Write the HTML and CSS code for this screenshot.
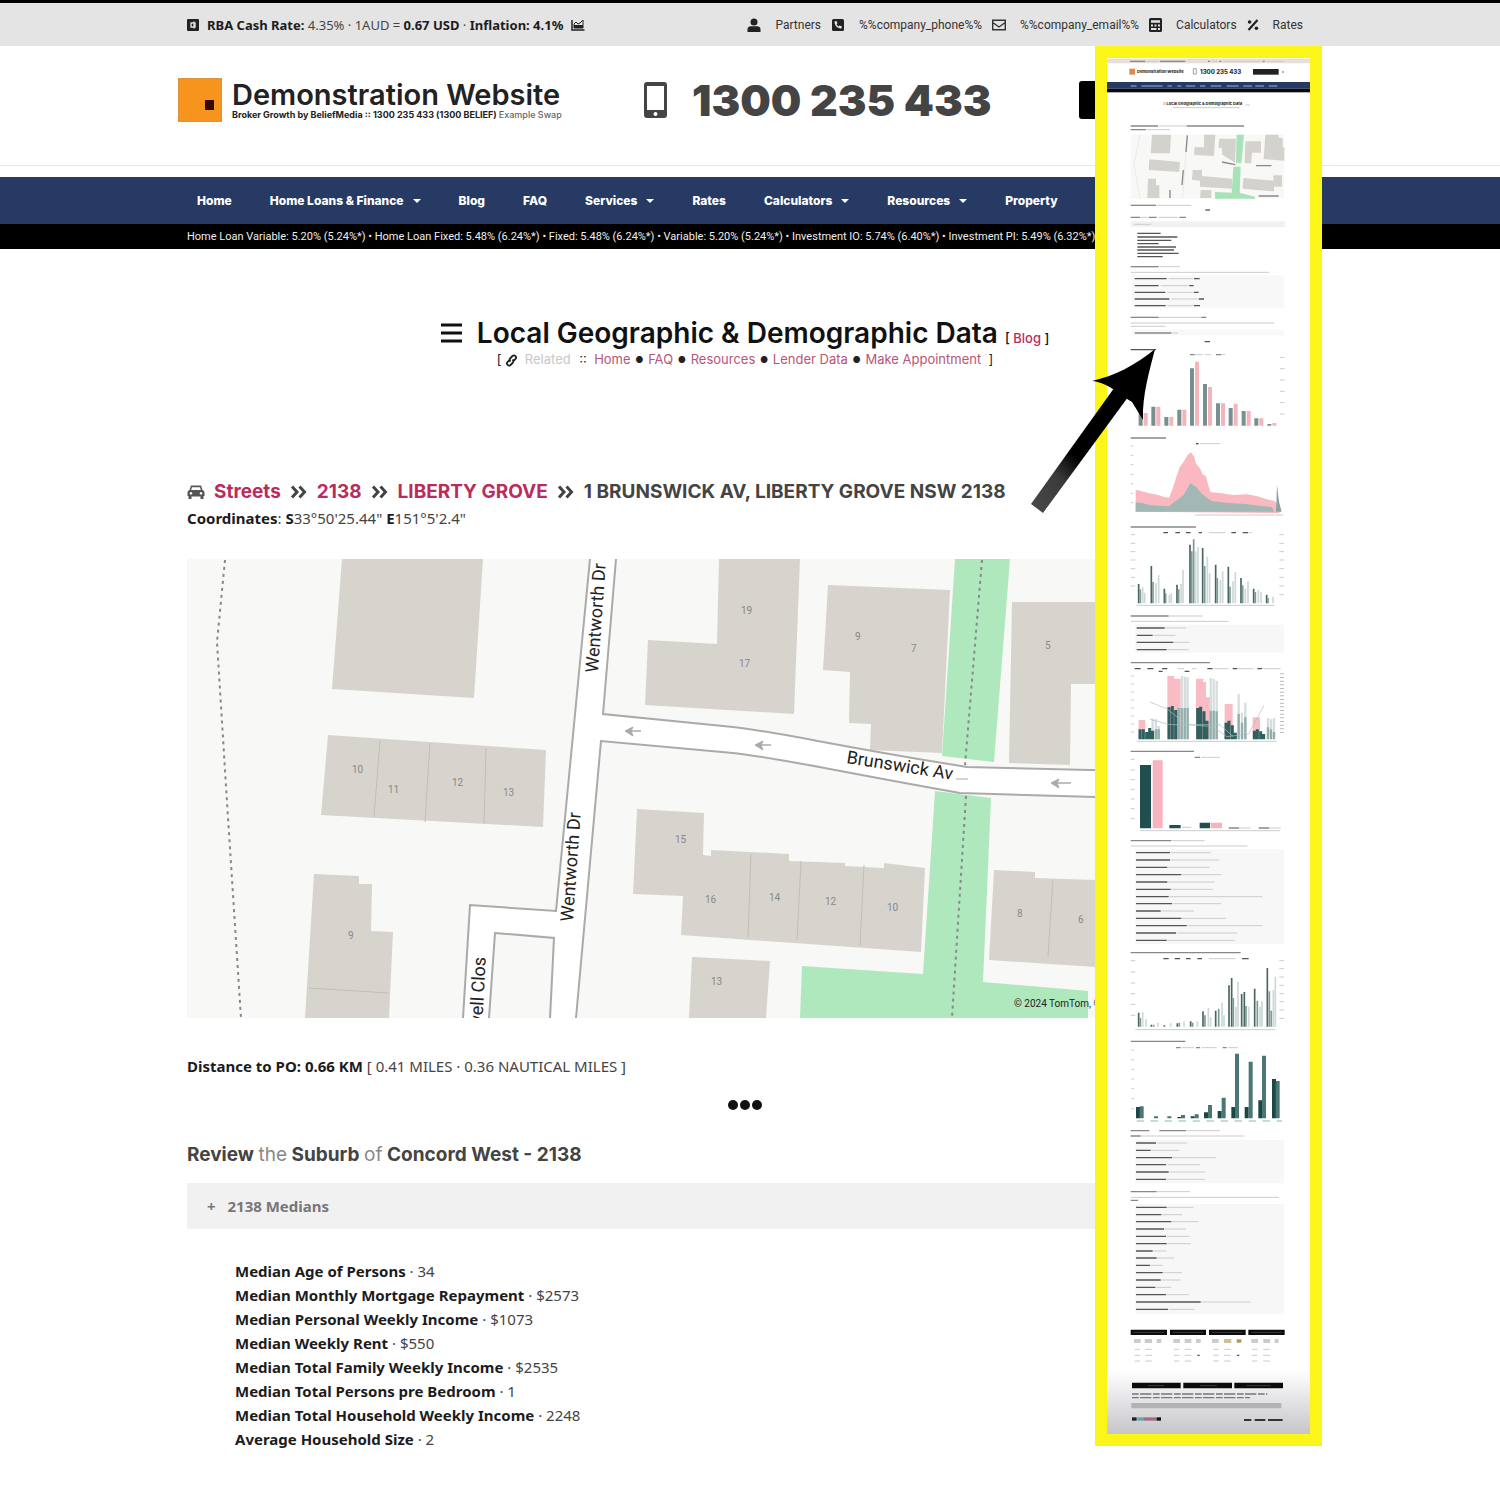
FILE: index.html
```html
<!DOCTYPE html>
<html lang="en">
<head>
<meta charset="UTF-8">
<meta name="viewport" content="width=device-width, initial-scale=1">
<title>Local Geographic &amp; Demographic Data</title>
<link rel="stylesheet" href="styles.css">
</head>
<body>

<div class="topbar">
<div class="wrap topbar-inner">
<p class="rates">
<svg class="icon" width="12" height="12" viewBox="0 0 12 12"><rect width="12" height="12" rx="1"/><path d="M4 4h4v4h-4zM7 2.5v7" fill="none" stroke="#ddd" stroke-width="1.4"/></svg>
<span><b>RBA Cash Rate:</b> 4.35% &middot; 1AUD = <b>0.67 USD</b> &middot; <b>Inflation: 4.1%</b></span>
<svg class="icon" width="14" height="12" viewBox="0 0 14 12"><path d="M1 1v10h12.500" fill="none" stroke="#222" stroke-width="1.500"/><path d="M3 9V5l2-2 2 2 2-1 3-3v8z" fill="none" stroke="#222"/><path d="M3 9V6h9v3z"/></svg>
</p>
<ul class="toplinks">
<li><svg class="icon" width="14" height="14" viewBox="0 0 14 14"><circle cx="7" cy="4" r="3.500"/><path d="M.5 14v-2.500C.5 9 2 8.300 4 8.300h6c2 0 3.500.7 3.500 3.200V14z"/></svg><a href="#">Partners</a></li>
<li><svg class="icon" width="14" height="14" viewBox="0 0 14 14"><rect x="1" y="1" width="12" height="12" rx="1.500"/><path d="M3.500 3.500l2-.6 1 2.400-1 .9c.5 1 1.200 1.700 2.200 2.200l.9-1 2.400 1-.6 2c-4 .3-7-3-6.900-6.900z" fill="#e4e4e4"/></svg><a href="#">%%company_phone%%</a></li>
<li><svg class="icon" width="14" height="14" viewBox="0 0 14 14"><path d="M.7 2.200h12.600v9.600H.7zM.7 4.500L7 9l6.300-4.500" fill="none" stroke="#333" stroke-width="1.400"/></svg><a href="#">%%company_email%%</a></li>
<li><svg class="icon" width="13" height="14" viewBox="0 0 13 14"><rect width="13" height="14" rx="1.500"/><path d="M2 2.200h9v2.600H2zM2 6.500h2v2H2zM5.500 6.500h2v2h-2zM9 6.500h2v2H9zM2 10h5.500v2H2zM9 10h2v2H9z" fill="#e4e4e4"/></svg><a href="#">Calculators</a></li>
<li><svg class="icon" width="12" height="14" viewBox="0 0 12 14"><path d="M1.500 12L10.500 2" stroke="#222" stroke-width="2.200"/><circle cx="2.600" cy="4" r="1.800"/><circle cx="9.400" cy="10.300" r="1.800"/></svg><a href="#">Rates</a></li>
</ul>
</div>
</div>

<header class="header">
<div class="header-inner">
<a class="logo" href="#">
<svg width="44" height="44" viewBox="0 0 44 44"><rect width="44" height="44" fill="#d9963f"/><rect x="1" y="1" width="42" height="42" fill="#f7941d"/><rect x="27" y="22" width="9" height="10" fill="#330a05"/></svg>
<span class="logo-text">
<span class="logo-name">Demonstration Website</span>
<span class="logo-tag">Broker Growth by BeliefMedia :: 1300 235 433 (1300 BELIEF) <i>Example Swap</i></span>
</span>
</a>
<a class="phone" href="tel:1300235433">
<svg width="23" height="36" viewBox="0 0 23 36"><path d="M3 0h17a3 3 0 0 1 3 3v30a3 3 0 0 1-3 3H3a3 3 0 0 1-3-3V3a3 3 0 0 1 3-3zM3 4v24h17V4zM11.500 30a2 2 0 1 0 .01 0z" fill="#444" fill-rule="evenodd"/></svg>
<span>1300 235 433</span>
</a>
<button class="cta" type="button" aria-label="Make Appointment"></button>
</div>
</header>

<nav class="nav">
<ul class="wrap menu">
<li><a href="#">Home</a></li>
<li><a class="sub" href="#">Home Loans &amp; Finance</a></li>
<li><a href="#">Blog</a></li>
<li><a href="#">FAQ</a></li>
<li><a class="sub" href="#">Services</a></li>
<li><a href="#">Rates</a></li>
<li><a class="sub" href="#">Calculators</a></li>
<li><a class="sub" href="#">Resources</a></li>
<li><a href="#">Property</a></li>
<li><a href="#">About</a></li>
</ul>
</nav>
<div class="ticker">
<p class="wrap">Home Loan Variable: 5.20% (5.24%*) &bull; Home Loan Fixed: 5.48% (6.24%*) &bull; Fixed: 5.48% (6.24%*) &bull; Variable: 5.20% (5.24%*) &bull; Investment IO: 5.74% (6.40%*) &bull; Investment PI: 5.49% (6.32%*)</p>
</div>

<main class="wrap main">
<div class="title">
<h1><svg width="21" height="20" viewBox="0 0 21 20"><path d="M0 2h21M0 10h21M0 18h21" stroke="#111" stroke-width="3"/></svg> Local Geographic &amp; Demographic Data <small>[ <a href="#">Blog</a> ]</small></h1>
<p class="related">[ <svg width="13" height="13" viewBox="0 0 13 13"><path d="M5.500 7.500C4 6 4.500 5 5.500 4l2-2c2-1.800 4.800 1 3 3L9 6.500M7.500 5.500C9 7 8.500 8 7.500 9l-2 2c-2 1.800-4.800-1-3-3L4 6.500" fill="none" stroke="#222" stroke-width="1.800"/></svg> <span class="faint">Related</span> :: &nbsp;<a href="#">Home</a> <i>&#9679;</i> <a href="#">FAQ</a> <i>&#9679;</i> <a href="#">Resources</a> <i>&#9679;</i> <a href="#">Lender Data</a> <i>&#9679;</i> <a href="#">Make Appointment</a> &nbsp;]</p>
</div>

<h2 class="crumbs">
<svg width="18" height="16" viewBox="0 0 18 16"><path d="M4 1.500h10l1.500 4.500c1.500.6 2 1.500 2 3V12h-1v3h-3v-2.500h-9V15h-3v-3h-1V9c0-1.500.5-2.400 2-3zM5 3.300L4.200 6h9.600L13 3.300zM4 8a1.300 1.300 0 1 0 .01 0zM14 8a1.300 1.300 0 1 0 .01 0z" fill="#555" fill-rule="evenodd"/></svg>
<a href="#">Streets</a>
<svg class="chev" width="18" height="14" viewBox="0 0 18 14"><path d="M2 1.500L7 7l-5 5.500M9.500 1.500l5 5.500-5 5.500"/></svg>
<a href="#">2138</a>
<svg class="chev" width="18" height="14" viewBox="0 0 18 14"><path d="M2 1.500L7 7l-5 5.500M9.500 1.500l5 5.500-5 5.500"/></svg>
<a href="#">LIBERTY GROVE</a>
<svg class="chev" width="18" height="14" viewBox="0 0 18 14"><path d="M2 1.500L7 7l-5 5.500M9.500 1.500l5 5.500-5 5.500"/></svg>
<span>1 BRUNSWICK AV, LIBERTY GROVE NSW 2138</span>
</h2>
<p class="line"><b>Coordinates</b>: <b>S</b>33&deg;50'25.44" <b>E</b>151&deg;5'2.4"</p>

<svg class="map" viewBox="187 559 1116 459" role="img" aria-label="Street map">
<rect x="187" y="559" width="1116" height="459" fill="#f8f8f6"/>
<g class="building">
<path d="M342 559h141l-9 139-142-9z"/>
<path d="M328 735l218 15-3 77-222-12z"/>
<path d="M314 874l45 2v8h13l-1 47 22 1-4 86h-84z"/>
<path d="M719 559h81l-6 155-149-9 3-65 69 4z"/>
<path d="M828 585l122 5-8 163-72-3 1-26-22-1 1-51-27-2z"/>
<path d="M1012 602h200v82h-141l-1 81-61-2z"/>
<path d="M637 809l67 4-1 42 8 1v-6l78 4v7l56 2v3l39 2v-5l41 5-4 84-240-17 2-39-50-2z"/>
<path d="M692 957l78 4-4 57h-77z"/>
<path d="M994 870l41 2v6l150 5v90l-196-13z"/>
</g>
<g class="plots">
<path d="M380 740l-6 77M430 743l-5 79M486 748l-2 76M309 988l80 5"/>
<path d="M751 854l-3 83M801 861l-4 79M864 865l-4 81M1053 880l-5 76"/>
</g>
<g class="park">
<path d="M955 559h55l-16 203-52-6z"/>
<path d="M935 791l56 7-8 184 105 9v27H800l2-52 121 8z"/>
</g>
<g class="road">
<path d="M590 559h26l-13 155 130 13c47 5 97 18 234 40l336 8v28l-208-6-135-4C830 770 780 758 733 753l-132-12-25 277h-24l3-82-59-4-7 86h-25l7-114 86 6z"/>
</g>
<g class="kerb">
<path d="M590 559l-34 352-86-6-7 113"/>
<path d="M616 559l-13 155 130 13c47 5 97 18 234 40l336 8"/>
<path d="M576 1018l25-277 132 12C780 758 830 770 960 793l135 4 208 6"/>
<path d="M489 1018l6-85 59 5-4 80"/>
</g>
<path class="dots" d="M225 560l-8 82 10 160 14 216M982 560l-17 205M966 796l-14 222"/>
<g class="ways">
<path d="M625 731l8-4-2 4h10-10l2 5zM755 745l8-4-2 4h10-10l2 5zM1051 783l8-4-2 4h14-14l2 5zM956 779h12"/>
</g>
<g class="nums">
<text x="352" y="773">10</text><text x="388" y="793">11</text><text x="452" y="786">12</text><text x="503" y="796">13</text>
<text x="348" y="939">9</text><text x="741" y="614">19</text><text x="739" y="667">17</text><text x="855" y="640">9</text>
<text x="911" y="652">7</text><text x="1045" y="649">5</text><text x="675" y="843">15</text><text x="705" y="903">16</text>
<text x="769" y="901">14</text><text x="825" y="905">12</text><text x="887" y="911">10</text><text x="1017" y="917">8</text>
<text x="1078" y="923">6</text><text x="711" y="985">13</text>
</g>
<g class="streets">
<text transform="translate(598 673) rotate(-86)">Wentworth Dr</text>
<text transform="translate(573 922) rotate(-86)">Wentworth Dr</text>
<text transform="translate(482 1029) rotate(-87)">well Clos</text>
<text transform="translate(846 763) rotate(9)">Brunswick Av</text>
</g>
<text class="credit" x="1014" y="1007">&copy; 2024 TomTom, &copy; OpenStreetMap</text>
</svg>

<p class="line distance"><b>Distance to PO: 0.66 KM</b> [ 0.41 MILES &middot; 0.36 NAUTICAL MILES ]</p>
<svg class="divider" width="36" height="10" viewBox="0 0 36 10"><circle cx="6" cy="5" r="5"/><circle cx="18" cy="5" r="5"/><circle cx="30" cy="5" r="5"/></svg>

<h2 class="review">Review <span>the</span> Suburb <span>of</span> Concord West - 2138</h2>
<button class="accordion" type="button"><span>+</span> 2138 Medians</button>
<ul class="medians">
<li><b>Median Age of Persons</b> &middot; 34</li>
<li><b>Median Monthly Mortgage Repayment</b> &middot; $2573</li>
<li><b>Median Personal Weekly Income</b> &middot; $1073</li>
<li><b>Median Weekly Rent</b> &middot; $550</li>
<li><b>Median Total Family Weekly Income</b> &middot; $2535</li>
<li><b>Median Total Persons pre Bedroom</b> &middot; 1</li>
<li><b>Median Total Household Weekly Income</b> &middot; 2248</li>
<li><b>Average Household Size</b> &middot; 2</li>
</ul>
</main>

<!-- full page preview, floats over the right of the page -->
<div class="overlay">
<div class="preview">
<svg viewBox="0 0 609 4128" role="img" aria-label="Full page preview">
<defs>
<linearGradient id="foot" x1="0" y1="0" x2="0" y2="1"><stop offset="0" stop-color="#fff"/><stop offset="1" stop-color="#c6c6ca"/></linearGradient>
</defs>
<rect width="609" height="4128" fill="#fff"/>

<!-- header, map, first lists -->
<g transform="translate(-81 -174)">
<path d="M81 176h609v14H81z" fill="#e8e0d8"/>
<path class="d" d="M150 184h46M240 184h76M384 184h6M418 184h6M548 184h6"/>
<path class="l" d="M200 184h36M396 184h18M430 184h110M560 184h54"/>
<rect x="148" y="206" width="17" height="18" fill="#dc8a50"/>
<text x="171" y="220" class="t" font-size="12">Demonstration Website</text>
<path d="M340 206h9v16h-9z" fill="none" stroke="#777" stroke-width="2"/>
<text x="360" y="222" class="t" font-size="18">1300 235 433</text>
<rect x="519" y="207" width="77" height="17" fill="#222"/><path class="d" d="M606 216h5"/>
<rect x="81" y="246" width="609" height="20" fill="#263a64"/><rect x="81" y="266" width="609" height="11" fill="#0a0a12"/>
<path d="M152 258h18M184 258h64M262 258h14M292 258h12M318 258h28M360 258h16M392 258h32M440 258h36M490 258h26M526 258h26M566 258h26" stroke="#9fb0d0" stroke-width="3"/>
<text x="250" y="316" class="t" font-size="12">&#8801; Local Geographic &amp; Demographic Data</text>
<path class="l" d="M280 323h200M496 315h14"/>
<path class="d" d="M152 378h82M320 378h172M152 389h46"/><path class="l" d="M236 378h82M200 389h70"/>
<rect x="152" y="404" width="461" height="192" fill="#f8f8f6"/>
<path class="b" d="M216 404h57l-3 56h-58zM208 478l92 8-2 30-92-6zM204 536h24v20h10v38h-36zM372 404h34l-4 64-60-3 2-24 28 1zM418 416h50l-3 72-38-24-2-20-10-1zM496 424h47v34h-27l-2 32h-20zM556 404h40v10h12v28h5v40l-62-5zM338 510h28v18l90 8v30l-96-6v-18l-24-3zM362 570h32v24h-34zM490 534l90 8v-16h26v34h-24v14l-94-8z"/>
<path d="M470 404h22l-8 86-16-2zM460 500h22l-3 78 46 12v6H405v-20l50 2z" fill="#a8e2b8"/>
<path d="M180 404l-18 90 18 102M322 404l-14 190" stroke="#e4e4e4" stroke-width="2" fill="none"/>
<path class="d" d="M322 406l-4 50M310 510l-4 45M270 570v24M426 486l40 8M528 497h46M536 588h60"/>
<path class="d" d="M152 616h76"/><path class="l" d="M230 616h104"/><path class="k" d="M376 630h14"/>
<path class="d" d="M152 652h28M206 652h24M298 652h20"/><path class="l" d="M182 652h20M236 652h58"/>
<rect x="152" y="664" width="462" height="17" fill="#f1f1f1"/><path class="l" d="M162 673h52"/>
<path class="k" d="M172 700h70M172 711h120M172 721h102M172 731h64M172 741h116M172 750h110M172 760h124M172 770h76"/>
<path class="d" d="M152 800h84"/><path class="l" d="M240 800h60M152 817h416"/>
<rect x="156" y="826" width="457" height="98" fill="#f8f8f8"/>
<path class="k" d="M164 836h96M164 857h72M164 877h92M164 897h104M164 917h93M342 836h17M328 857h13M342 877h14M356 897h16M342 917h18"/>
<path class="l" d="M266 836h72M242 857h84M262 877h78M274 897h78M262 917h78M152 952h226M152 969h430M152 979h104"/>
<path class="d" d="M152 952h84M364 952h15"/>
<rect x="156" y="989" width="457" height="17" fill="#f8f8f8"/><path class="d" d="M164 999h110"/><path class="l" d="M274 999h20"/>
<path class="k" d="M374 1025h16M152 1049h76"/>
</g>

<!-- population charts -->
<g transform="translate(-51 816)">
<path class="d" d="M300 74h14M378 74h16"/><path class="l" d="M316 74h22M344 74h20M396 74h10"/>
<path class="l" d="M570 82h14M570 116h14M570 150h14M570 184h14M570 218h14M570 252h14"/>
<path class="bars grey" d="M152 287v-38M190 287v-57M229 287v-26M268 287v-48M306 287v-172M345 287v-125M384 287v-67M422 287v-53M461 287v-44M499 287v-22M538 287v-5"/>
<path class="bars pink" d="M167 287v-38M205 287v-57M244 287v-26M283 287v-48M321 287v-192M360 287v-116M399 287v-67M437 287v-66M476 287v-44M514 287v-22M553 287v-8"/>
<path class="d" d="M122 324h106"/><path class="l" d="M330 341h60M316 555h264"/><path class="k" d="M318 341h8"/>
<path class="l" d="M122 348h8M122 376h8M122 404h8M122 433h8M122 461h8M122 490h8M122 518h8"/>
<path d="M137 545v-66l24 6 24 6 20 4 16 6 16 2 12-30 8-26 12-36 12-16 10-18 11-10 10 12 6 22 12 14 8 18 10 6 6 24 8 24 30 2 20 4 20 2 40-2 30 6 26 8 26 6 14 20v16z" fill="#fab8c0"/>
<path d="M137 545v-28l20 2 20 6 30 2 30 2 20-16 24-18 20-36 20 14 12 16 12 10 20 14 40 5 60 4 50 6 30 3 8 14z" fill="#a3b7b4"/>
<path d="M558 545l3-80 6 50 8 30z" fill="#8aa3a0"/>
<path class="d" d="M122 591h196"/>
<path class="k" d="M220 608h14M256 608h14M288 608h14M326 608h10M424 608h14M458 608h16"/><path class="l" d="M356 608h50M476 608h10"/>
<path class="l" d="M122 614h14M122 640h14M122 665h14M122 690h14M122 716h14M122 742h14M122 768h14M568 614h14M568 640h14M568 665h14M568 690h14M568 716h14M568 742h14M568 768h14M568 794h14"/>
<path class="thin dark" d="M146 820v-58M184 820v-112M223 820v-44M261 820v-56M300 820v-176M338 820v-166M377 820v-116M415 820v-110M453 820v-76M491 820v-44M530 820v-26"/>
<path class="thin mid" d="M151 820v-42M189 820v-64M227 820v-30M266 820v-42M305 820v-156M311 820v-192M344 820v-112M382 820v-76M420 820v-50M458 820v-54M496 820v-34M534 820v-16"/>
<path class="thin pale" d="M158 820v-48M164 820v-32M198 820v-60M206 820v-84M238 820v-26M244 820v-30M273 820v-58M279 820v-100M317 820v-156M324 820v-170M352 820v-140M359 820v-90M391 820v-70M398 820v-96M429 820v-66M436 820v-94M466 820v-44M474 820v-66M505 820v-40M513 820v-34M549 820v-20"/>
<path class="l" d="M140 826h414"/>
</g>

<!-- family and income charts -->
<g transform="translate(-51 1626)">
<path class="d" d="M122 48h114"/><path class="l" d="M238 48h100M122 64h294"/>
<rect x="136" y="74" width="446" height="84" fill="#f7f7f7"/>
<path class="k" d="M140 84h84M140 106h48M140 127h110M140 149h90"/><path class="l" d="M226 84h62M190 106h66M252 127h46M232 149h64"/>
<path class="d" d="M122 188h238"/>
<path class="k" d="M134 206h18M172 206h18M216 206h16M352 206h16M428 206h14M502 206h14M206 214h12M284 214h14"/>
<path class="l" d="M262 206h20M306 206h14M372 206h44M444 206h46M518 206h54"/>
<path class="l" d="M122 228h10M122 252h10M122 276h10M122 300h10M122 324h10M122 348h10M122 372h10M122 396h10"/>
<path d="M576 220v184" stroke="#bbb" stroke-width="12" stroke-dasharray="3 8"/>
<path d="M232 228h20v8h20v182h-40zM318 236h22v10h8v46h18v126h-48zM404 312h24v106h-24zM488 352h22v66h-22zM146 360h20v58h-20z" fill="#f9bcc4"/>
<path d="M276 418v-190M285 418v-188M293 418v-186M362 418v-184M371 418v-182M380 418v-176M446 418v-136M456 418v-80M466 418v-110M534 418v-64M543 418v-60M552 418v-64M188 418v-62M198 418v-60M206 418v-40" stroke="#d6dedd" stroke-width="7"/>
<path d="M266 418v-94M275 418v-94M284 418v-94M293 418v-94M362 418v-86M371 418v-86M380 418v-84M446 418v-76M456 418v-50M466 418v-66M534 418v-36M543 418v-30M552 418v-22M198 418v-30M206 418v-30" stroke="#91aeab" stroke-width="7"/>
<path d="M150 418v-30M160 418v-30M170 418v-22M179 418v-34M188 418v-26M237 418v-96M247 418v-100M257 418v-88M323 418v-94M332 418v-98M342 418v-84M351 418v-56M408 418v-50M417 418v-56M427 418v-42M436 418v-20M493 418v-26M502 418v-30M512 418v-24M521 418v-16" stroke="#2d605e" stroke-width="9"/>
<path d="M180 306l50 20 60 48 80 6 40 30 66-8 46-86M180 358l60 16h150l40 36" fill="none" stroke="#a9c0be" stroke-width="2"/>
<path class="l" d="M140 424h420"/>
<path class="d" d="M122 454h190M314 472h16"/><path class="l" d="M334 472h56M122 478h12M122 510h12M122 539h12M122 568h12M122 597h12M122 626h12M122 656h12"/>
<path d="M150 495h33v190h-33zM329 668h31v17h-31zM238 675h34v10h-34z" fill="#204f50"/>
<path d="M188 481h30v204h-30zM362 668h34v17h-34z" fill="#f7b4be"/>
<path class="d" d="M416 684h32M506 684h32"/><path class="l" d="M276 682h28M450 684h32M540 684h32M150 692h420"/>
</g>

<!-- education list, labour charts -->
<g transform="translate(-51 2346)">
<path class="d" d="M122 2h122"/><path class="l" d="M246 2h98M122 18h350"/>
<rect x="136" y="28" width="446" height="284" fill="#f7f7f7"/>
<path class="k" d="M138 38h102M138 60h102M138 82h94M138 104h136M138 126h94M138 148h104M138 170h98M138 191h108M138 213h74M138 235h136M138 257h152M138 279h120M138 301h92"/>
<path class="l" d="M242 38h120M242 60h146M234 82h124M276 104h118M234 126h140M244 148h124M238 170h280M248 191h146M214 213h98M276 235h132M292 257h226M260 279h182M232 301h202"/>
<path class="d" d="M122 338h330"/>
<path class="k" d="M220 356h16M254 356h16M288 356h14M322 356h14M456 356h20"/><path class="l" d="M356 356h80M122 362h14M122 396h14M122 429h14M122 461h14M122 493h14M122 526h14M568 362h14M568 386h14M568 411h14M568 436h14M568 461h14M568 485h14M568 510h14M568 535h14"/>
<path class="thin dark" d="M146 560v-42M184 560v-6M223 560v-4M262 560v-10M302 560v-16M339 560v-46M377 560v-48M417 560v-124M425 560v-146M455 560v-98M463 560v-104M494 560v-114M532 560v-176"/>
<path class="thin mid" d="M151 560v-26M191 560v-6M268 560v-12M308 560v-12M345 560v-34M386 560v-54M430 560v-86M468 560v-62M502 560v-78M538 560v-106M544 560v-48"/>
<path class="thin pale" d="M158 560v-44M168 560v-22M204 560v-12M242 560v-10M282 560v-16M322 560v-16M355 560v-56M362 560v-28M396 560v-72M402 560v-34M438 560v-60M444 560v-134M476 560v-60M510 560v-60M516 560v-76M550 560v-110M556 560v-150"/>
<path class="l" d="M136 569h420"/>
<path class="d" d="M122 604h164M258 623h14M318 623h12M398 623h12"/><path class="l" d="M276 623h36M334 623h46M414 623h30M124 630h8M124 659h8M124 688h8M124 717h8M124 746h8M124 776h8M124 806h8"/>
<path d="M144 835v-34M348 835v-18M389 835v-22M430 835v-34M470 835v-34M511 835v-54M552 835v-118M308 835v-6M268 835v-4" class="bars teal"/>
<path d="M155 835v-36M198 835v-6M238 835v-6M279 835v-10M320 835v-12M360 835v-40M401 835v-62M441 835v-194M482 835v-170M522 835v-188M563 835v-112" class="bars slate"/>
<path d="M140 843h436" stroke="#8fb5b5" stroke-width="3" stroke-dasharray="22 20"/>
<path class="d" d="M122 872h56M208 872h80M122 888h30"/><path class="l" d="M290 872h100M152 888h312"/>
</g>

<!-- last lists and footer -->
<g transform="translate(-51 3186)">
<rect x="51" y="750" width="609" height="192" fill="url(#foot)"/>
<rect x="136" y="60" width="446" height="130" fill="#f7f7f7"/>
<path class="k" d="M138 69h60M138 91h44M138 113h108M138 134h90M138 156h98M138 178h90"/>
<path class="l" d="M202 69h88M184 91h84M248 113h130M232 134h98M238 156h106M230 178h114"/>
<path class="d" d="M122 215h78M122 241h22"/><path class="l" d="M202 215h98M122 232h444"/>
<rect x="136" y="252" width="446" height="330" fill="#f7f7f7"/>
<path class="k" d="M138 262h92M138 284h76M138 305h106M138 327h84M138 349h90M138 371h92M138 393h50M138 414h62M138 436h42M138 458h80M138 480h74M138 502h58M138 524h90M138 546h194M138 568h96"/>
<path class="l" d="M232 262h78M216 284h60M246 305h80M224 327h64M230 349h68M232 371h70M190 393h40M202 414h50M182 436h36M220 458h56M214 480h58M198 502h46M230 524h66M334 546h148M236 568h78"/>
<path d="M122 629h109v16H122zM240 629h108v16H240zM357 629h110v16H357zM475 629h109v16H475zM126 788h146v17H126zM280 788h146v17H280zM433 788h146v17H433z" fill="#0b0b0b"/>
<path d="M130 637h92M248 637h92M366 637h92M484 637h92M174 797h48M330 797h50M470 797h72" stroke="#555" stroke-width="2"/>
<path d="M132 663h20M164 663h22M200 663h14M250 663h20M284 663h20M318 663h14M366 663h20M484 663h20M520 663h20M554 663h12" stroke="#ccc" stroke-width="12"/>
<path d="M402 663h22" stroke="#cdbf96" stroke-width="12"/><path d="M440 663h14" stroke="#a89c50" stroke-width="10"/>
<path class="l" d="M134 688h16M166 688h20M134 706h16M166 706h20M134 723h16M166 723h20M252 688h16M284 688h20M252 706h16M284 706h20M252 723h16M284 723h20M370 688h16M402 688h20M370 706h16M402 706h20M370 723h16M402 723h20M486 688h16M520 688h20M486 706h16M520 706h20M486 723h16M520 723h20"/>
<path class="k" d="M322 706h7M441 706h7"/>
<path d="M126 822h406M126 833h354" stroke="#777" stroke-width="4" stroke-dasharray="20 4 34 5"/>
<path d="M124 857h450" stroke="#b2b2b4" stroke-width="16"/>
<path d="M126 897h14" stroke="#222" stroke-width="10"/><path d="M142 897h20" stroke="#5aa7b8" stroke-width="10"/><path d="M162 897h38" stroke="#a06a88" stroke-width="10"/><path d="M200 897h13" stroke="#111" stroke-width="10"/>
<path d="M462 900h22M494 900h32M534 900h44" stroke="#333" stroke-width="6"/>
</g>
</svg>
</div>
<svg class="pointer" width="128" height="166" viewBox="0 0 128 166">
<defs><linearGradient id="shaft" x1="0" y1="1" x2=".5" y2=".4"><stop offset="0" stop-color="#4a4a4a"/><stop offset=".5" stop-color="#3a3a3a"/><stop offset=".8" stop-color="#000"/></linearGradient></defs>
<path d="M1 157L87 37l14 9L13 166z" fill="url(#shaft)"/>
<path d="M125 2c-5 20-13 46-12 71l-11-18-13-8c-5-6-20-13-27-13 22-5 44-16 63-32z"/>
</svg>
</div>

</body>
</html>
```
FILE: styles.css
```css
*{ box-sizing: border-box; }
body{
    margin: 0;
    position: relative;
    overflow-x: hidden;
    color: #444;
    background: #fff;
    font-family: "Noto Sans", "Open Sans", sans-serif;
    font-size: 15px;
    line-height: 24px;
}
a{ color: #b92d5d; text-decoration: none; }
b{ color: #1c1c1c; font-weight: 700; }
p, h1, h2, ul{ margin: 0; padding: 0; }
ul{ list-style: none; }
svg{ display: block; }
.wrap{ max-width: 1126px; margin: 0 auto; padding-right: 10px; }
.icon{ fill: #222; flex: none; }

/* top bar */
.topbar{ background: #e4e4e4; border-top: 3px solid #000; }
.topbar-inner{ display: flex; justify-content: space-between; align-items: center; height: 43px; }
.rates{ display: flex; align-items: center; gap: 8px; font-size: 13px; }
.toplinks{ display: flex; gap: 10px; font-family: Roboto, sans-serif; font-size: 12px; }
.toplinks li{ display: flex; align-items: center; gap: 14px; }
.toplinks a{ color: #333; }

/* logo and phone */
.header{ border-bottom: 1px solid #e8e8e8; margin-bottom: 11px; }
.header-inner{
    display: grid;
    grid-template-columns: 466fr 435fr 243fr;
    align-items: center;
    max-width: 1144px;
    margin: 0 auto;
    padding: 32px 0 43px;
}
.logo{ display: flex; align-items: center; gap: 10px; color: #222; font-family: Inter, sans-serif; white-space: nowrap; }
.logo-text{ display: flex; flex-direction: column; }
.logo-name{ font-size: 29px; font-weight: 600; line-height: 30px; }
.logo-tag{ font-size: 9px; font-weight: 700; line-height: 10px; }
.logo-tag i{ font-style: normal; font-weight: 500; color: #666; }
.phone{ display: flex; align-items: center; gap: 25px; height: 44px; color: #444; font: 900 43px/44px Inter, sans-serif; white-space: nowrap; }
.cta{ width: 187px; height: 38px; border: 0; border-radius: 3px; background: #000; }

/* menu */
.nav{ background: #263a64; }
.menu{ display: flex; gap: 38px; padding-left: 10px; font: 800 12px/48px Inter, sans-serif; height: 47px; white-space: nowrap; }
.menu a{ display: flex; align-items: center; gap: 9px; color: #fff; }
.menu .sub:after{ content: ""; border: 4px solid transparent; border-top-color: #fff; border-bottom: 0; }
.ticker{ background: #000; color: #eee; font: 11px/25px Roboto, sans-serif; white-space: nowrap; }

/* page title */
.title{ padding-top: 68px; text-align: center; }
.title svg{ display: inline-block; }
h1{ color: #111; font: 600 28px/32px Inter, sans-serif; }
h1 svg{ margin-right: 8px; }
h1 small{ font: 500 13px/20px Inter, sans-serif; }
.related{ color: #222; font: 13px/20px Inter, sans-serif; }
.related svg{ vertical-align: middle; }
.related a{ color: #b95576; }
.related i{ margin: 0 1px; font-size: 9px; font-style: normal; vertical-align: 1px; }
.faint{ margin: 0 5px 0 3px; color: #c8c8c8; }

.crumbs{ display: flex; align-items: center; gap: 9px; margin-top: 108px; color: #444; font: 700 19px/28px Inter, sans-serif; white-space: nowrap; }
.chev path{ fill: none; stroke: #444; stroke-width: 3; }

/* map */
.map{ width: 100%; margin-top: 29px; }
.building{ fill: #d7d4cd; }
.plots, .kerb{ fill: none; stroke: #c2beb8; }
.kerb{ stroke: #aaa; stroke-width: 2; }
.park{ fill: #b0e8bd; }
.road{ fill: #fff; }
.dots{ fill: none; stroke: #888; stroke-width: 2; stroke-dasharray: 3 4; }
.ways{ fill: #aaa; stroke: #aaa; }
.nums{ fill: #888; font: 10px Roboto, sans-serif; }
.streets{ fill: #222; font: 18px Roboto, sans-serif; }
.credit{ fill: #222; font: 10px Roboto, sans-serif; }

.distance{ margin-top: 36px; }
.divider{ margin: 22px auto 31px; fill: #111; }
.review{ color: #444; font: 700 19px/28px Inter, sans-serif; }
.review span{ color: #888; font-weight: 400; }
.accordion{
    display: block;
    width: 100%;
    height: 46px;
    margin-top: 14px;
    padding: 0 20px;
    border: 0;
    background: #f1f1f1;
    color: #777;
    font: 700 15px/24px "Noto Sans", sans-serif;
    text-align: left;
}
.accordion span{ margin-right: 8px; }
.medians{ margin-top: 30px; padding: 0 0 48px 48px; }

/* preview */
.overlay{ position: absolute; top: 46px; left: 50%; width: 227px; margin-left: 345px; }
.preview{ border: 12px solid #fbf51a; }
.pointer{ position: absolute; top: 301px; left: -65px; }
.t{ font-family: Inter, sans-serif; font-weight: 800; fill: #333; }
.k, .d, .l{ fill: none; stroke: #555; stroke-width: 4; }
.d{ stroke: #888; }
.l{ stroke: #ccc; stroke-width: 3; }
.b{ fill: #d4d2cd; }
.bars{ fill: none; stroke-width: 12; }
.grey{ stroke: #78908d; }
.pink{ stroke: #f5b3bb; }
.teal{ stroke: #1d4746; }
.slate{ stroke: #4a7774; }
.thin{ fill: none; stroke-width: 5; }
.dark{ stroke: #4b6562; }
.mid{ stroke: #7d9a97; }
.pale{ stroke: #ccd9d7; }
```
